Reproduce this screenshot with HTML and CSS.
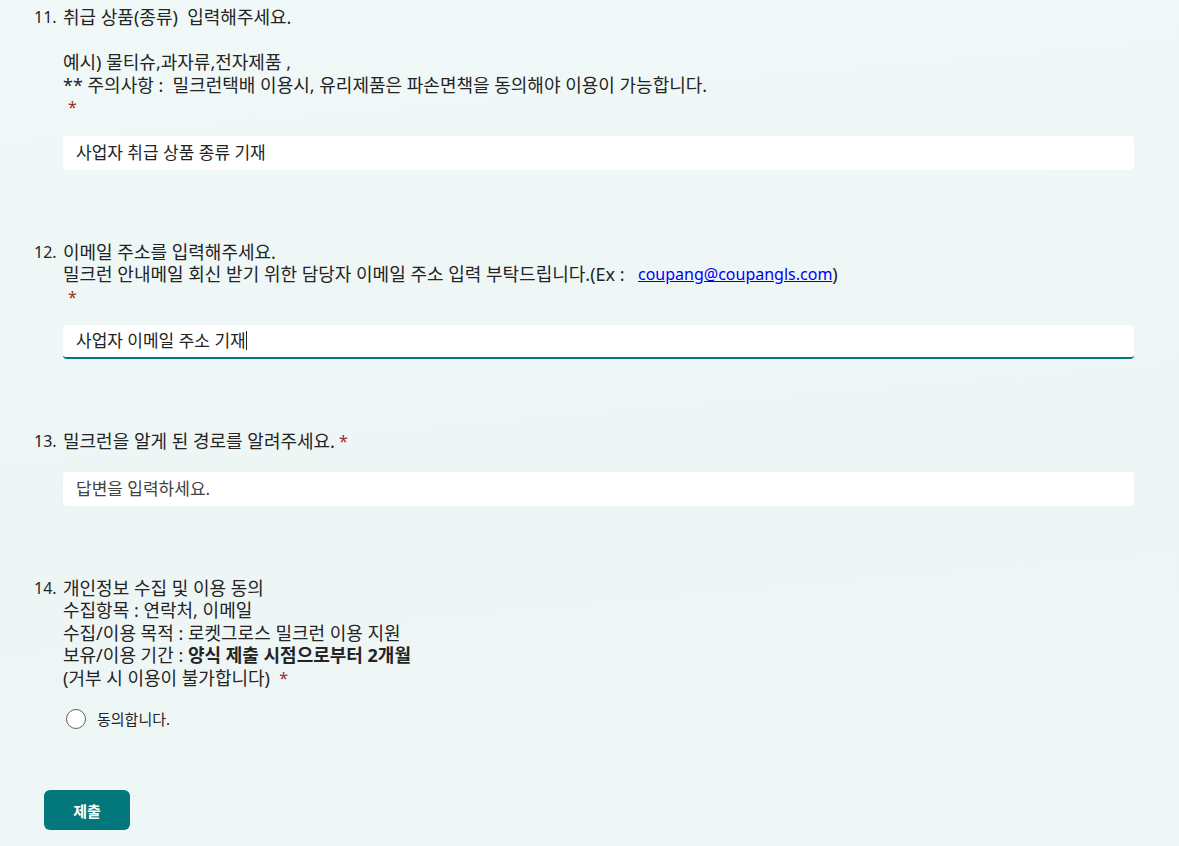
FILE: index.html
```html
<!DOCTYPE html>
<html lang="ko">
<head>
  <meta charset="UTF-8" />
  <meta name="viewport" content="width=device-width, initial-scale=1.0"/>
  <title>밀크런 신청</title>
  <link rel="stylesheet" href="styles.css">
</head>
<body>
  <form class="form-body">
    <div class="question">
      <div class="q-title">
        <span class="q-num">11.</span>
        <div class="q-text">
          <div>취급 상품(종류)&nbsp; 입력해주세요.</div>
          <div>&nbsp;</div>
          <div>예시) 물티슈,과자류,전자제품 ,</div>
          <div>** 주의사항 :&nbsp; 밀크런택배 이용시, 유리제품은 파손면책을 동의해야 이용이 가능합니다.</div>
          <div class="req-line"><span class="req">*</span></div>
        </div>
      </div>
      <input class="answer" type="text" value="사업자 취급 상품 종류 기재">
    </div>

    <div class="question">
      <div class="q-title">
        <span class="q-num">12.</span>
        <div class="q-text">
          <div>이메일 주소를 입력해주세요.</div>
          <div>밀크런 안내메일 회신 받기 위한 담당자 이메일 주소 입력 부탁드립니다.(Ex :&nbsp; <a href="#">coupang@coupangls.com</a>)</div>
          <div class="req-line"><span class="req">*</span></div>
        </div>
      </div>
      <div class="answer focused">사업자 이메일 주소 기재<span class="caret"></span></div>
    </div>

    <div class="question">
      <div class="q-title">
        <span class="q-num">13.</span>
        <div class="q-text">
          <div>밀크런을 알게 된 경로를 알려주세요.<span class="req inline">*</span></div>
        </div>
      </div>
      <input class="answer q13" type="text" placeholder="답변을 입력하세요.">
    </div>

    <div class="question">
      <div class="q-title">
        <span class="q-num">14.</span>
        <div class="q-text">
          <div>개인정보 수집 및 이용 동의</div>
          <div>수집항목 : 연락처, 이메일</div>
          <div>수집/이용 목적 : 로켓그로스 밀크런 이용 지원</div>
          <div>보유/이용 기간 : <b>양식 제출 시점으로부터 2개월</b></div>
          <div>(거부 시 이용이 불가합니다)&nbsp; <span class="req">*</span></div>
        </div>
      </div>
      <label class="choice">
        <span class="radio"></span>
        <span class="choice-text">동의합니다.</span>
      </label>
    </div>

    <button type="button" class="submit-btn">제출</button>
  </form>
</body>
</html>
```

FILE: styles.css
```css
body {
  margin: 0;
  padding: 0;
  background: #eef6f6;
  background-image: linear-gradient(175deg, #f1f8f8 0%, #edf5f5 55%, #eff6f6 100%);
  font-family: "Noto Sans", "Noto Sans CJK KR", sans-serif;
  color: #242424;
  min-height: 846px;
}
.form-body {
  padding: 6px 45px 0 34px;
}
.question {
  margin-bottom: 71px;
}
.q-title {
  display: flex;
  font-size: 18px;
  line-height: 22.5px;
}
.q-num {
  width: 29px;
  flex-shrink: 0;
  font-size: 16px;
}
.q-text {
  flex: 1;
}
.q-text > div {
  height: 22.5px;
  white-space: nowrap;
}
.q-text a {
  color: #0000ee;
  font-size: 16px;
  vertical-align: top;
  margin-left: 4px;
}
.req {
  color: #a4262c;
  font-size: 16px;
  vertical-align: top;
}
.req-line {
  padding-left: 5px;
}
.req.inline {
  margin-left: 4px;
}
.answer {
  display: block;
  box-sizing: border-box;
  width: calc(100% - 29px);
  margin: 17px 0 0 29px;
  height: 34px;
  padding: 0 13px;
  border: none;
  border-radius: 4px;
  background: white;
  font-family: inherit;
  font-size: 17px;
  line-height: 34px;
  color: #242424;
  outline: none;
}
.answer.q13 {
  margin-top: 19px;
}
.answer::placeholder {
  color: #424242;
}
.answer.focused {
  border-bottom: 2px solid #03787c;
  line-height: 32px;
}
.caret {
  display: inline-block;
  width: 1px;
  height: 19px;
  background: #242424;
  vertical-align: -3px;
}
.choice {
  display: flex;
  align-items: center;
  gap: 11px;
  margin: 19px 0 0 32px;
}
.radio {
  width: 20px;
  height: 20px;
  box-sizing: border-box;
  border: 1px solid #616161;
  border-radius: 50%;
  background: white;
}
.choice-text {
  font-size: 15px;
}
.question:last-of-type {
  margin-bottom: 0;
}
.submit-btn {
  margin: 61px 0 0 10px;
  width: 86px;
  height: 40px;
  border: none;
  border-radius: 6px;
  background: #03787c;
  color: white;
  font-family: inherit;
  font-size: 15px;
  font-weight: bold;
  cursor: pointer;
}
```
